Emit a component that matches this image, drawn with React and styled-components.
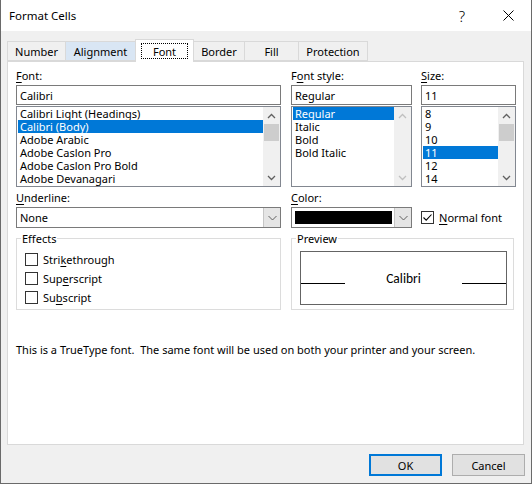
import React from "react";
import styled, { createGlobalStyle } from "styled-components";

const FONT = `"Noto Sans", "Segoe UI", "Liberation Sans", sans-serif`;

const GlobalStyle = createGlobalStyle`
  html, body { margin: 0; padding: 0; background: #ffffff; }
  *, *::before, *::after { box-sizing: border-box; }
  u { text-decoration-thickness: 1px; text-underline-offset: 2px; }
`;

const Window = styled.div`
  width: 532px;
  height: 484px;
  display: flex;
  flex-direction: column;
  background: #f0f0f0;
  border: 1px solid #6a6a6a;
  border-top: none;
  font-family: ${FONT};
  font-size: 11px;
  color: #000;
  overflow: hidden;
`;

const TitleBar = styled.div`
  height: 31px;
  flex-shrink: 0;
  display: flex;
  align-items: center;
  background: #ffffff;
`;

const Title = styled.div`
  flex: 1;
  padding-left: 8px;
  font-size: 11.5px;
`;

const CaptionButton = styled.div`
  width: 46px;
  height: 31px;
  display: flex;
  align-items: center;
  justify-content: center;
  font-size: 15px;
  font-weight: 300;
`;

const Body = styled.div`
  flex: 1;
  display: flex;
  flex-direction: column;
  padding: 8px 7px 0 6px;
`;

const TabStrip = styled.div`
  height: 22px;
  display: flex;
  align-items: flex-end;
`;

const Tab = styled.div`
  width: ${(p) => p.$w}px;
  height: ${(p) => (p.$active ? 23 : 20)}px;
  margin-left: ${(p) => (p.$first ? 0 : -1)}px;
  margin-bottom: ${(p) => (p.$active ? -1 : 0)}px;
  border: 1px solid #d9d9d9;
  border-bottom: ${(p) => (p.$active ? "none" : "1px solid #d9d9d9")};
  background: ${(p) => (p.$active ? "#ffffff" : p.$hover ? "#d9e6f4" : "#f0f0f0")};
  position: relative;
  z-index: ${(p) => (p.$active ? 2 : 1)};
  display: flex;
  justify-content: center;
  align-items: ${(p) => (p.$active ? "flex-start" : "center")};
  padding-top: ${(p) => (p.$active ? 0 : 1)}px;
`;

const FocusRing = styled.div`
  flex: 1;
  margin: 3px 5px 0;
  height: 16px;
  border: 1px dotted #000;
  display: flex;
  align-items: center;
  justify-content: center;
`;

const Panel = styled.div`
  height: 384px;
  background: #ffffff;
  border: 1px solid #d9d9d9;
  padding: 6px 0 0 8px;
  display: flex;
  flex-direction: column;
`;

const Grid = styled.div`
  display: grid;
  grid-template-columns: 265px 10px 121px 9px 95px;
  row-gap: 3px;
`;

const Cell = styled.div`
  grid-column: ${(p) => p.$col};
  display: flex;
  flex-direction: column;
`;

const Label = styled.div`
  height: 15px;
  line-height: 15px;
  margin-bottom: 2px;
  white-space: nowrap;
`;

const TextBox = styled.div`
  height: 20px;
  border: 1px solid #7a7a7a;
  background: #fff;
  padding-left: 3px;
  display: flex;
  align-items: center;
  margin-bottom: 1px;
`;

const ListBox = styled.div`
  height: 81px;
  border: 1px solid #828790;
  background: #fff;
  display: flex;
`;

const Items = styled.div`
  flex: 1;
  display: flex;
  flex-direction: column;
  overflow: hidden;
`;

const Item = styled.div`
  height: 13px;
  line-height: 13px;
  margin: 0 0 0 1px;
  padding-left: 2px;
  white-space: nowrap;
  background: ${(p) => (p.$sel ? "#0078d7" : "transparent")};
  color: ${(p) => (p.$sel ? "#ffffff" : "#000000")};
`;

const ScrollBar = styled.div`
  width: 17px;
  background: #f0f0f0;
  display: flex;
  flex-direction: column;
`;

const ScrollArrow = styled.div`
  height: 17px;
  display: flex;
  align-items: center;
  justify-content: center;
`;

const Track = styled.div`
  flex: 1;
  padding: 0 1px;
`;

const Thumb = styled.div`
  height: 17px;
  background: #cdcdcd;
`;

const Combo = styled.div`
  height: 21px;
  border: 1px solid #7a7a7a;
  background: #fff;
  display: flex;
  align-items: stretch;
`;

const ComboValue = styled.div`
  flex: 1;
  display: flex;
  align-items: center;
  padding-left: 3px;
`;

const Swatch = styled.div`
  flex: 1;
  margin: 3px 2px 3px 3px;
  background: #000;
`;

const ComboArrow = styled.div`
  width: 17px;
  background: #e5e5e5;
  border-left: 1px solid #c6c6c6;
  display: flex;
  align-items: center;
  justify-content: center;
`;

const CheckRow = styled.div`
  height: ${(p) => p.$h || 19}px;
  display: flex;
  align-items: center;
  gap: 5px;
  white-space: nowrap;
`;

const CheckBox = styled.div`
  width: 13px;
  height: 13px;
  border: 1px solid #333333;
  background: #fff;
  display: flex;
  align-items: center;
  justify-content: center;
  flex-shrink: 0;
`;

const Group = styled.fieldset`
  grid-column: ${(p) => p.$col};
  margin: 0 ${(p) => p.$mr || 0}px 0 0;
  padding: 0;
  min-width: 0;
  height: 79px;
  border: 1px solid #dcdcdc;
`;

const Legend = styled.legend`
  margin-left: 4px;
  padding: 0 1px;
  line-height: 15px;
  height: 15px;
`;

const GroupBody = styled.div`
  padding: ${(p) => p.$pad};
`;

const PreviewBox = styled.div`
  height: 54px;
  border: 1px solid #646464;
  display: flex;
  align-items: center;
`;

const BaseLine = styled.div`
  flex: 1;
  height: 1px;
  background: #000;
  margin-top: 11px;
`;

const PreviewText = styled.div`
  margin: 0 41px;
  font-family: "Carlito", "Noto Sans", sans-serif;
  font-size: 13.5px;
  line-height: 17px;
`;

const Note = styled.div`
  margin-top: 32px;
  line-height: 15px;
  white-space: pre;
`;

const ButtonRow = styled.div`
  display: flex;
  justify-content: flex-end;
  gap: 10px;
  padding-top: 9px;
  margin-right: -1px;
`;

const Button = styled.div`
  width: 73px;
  height: 22px;
  background: #e1e1e1;
  border: ${(p) => (p.$default ? "2px solid #0078d7" : "1px solid #adadad")};
  display: flex;
  align-items: center;
  justify-content: center;
`;

const Chevron = ({ up, color = "#606060" }) => (
  <svg width="9" height="6" viewBox="0 0 9 6">
    <polyline
      points={up ? "1,5 4.5,1.5 8,5" : "1,1 4.5,4.5 8,1"}
      fill="none"
      stroke={color}
      strokeWidth="1.3"
    />
  </svg>
);

const ThinChevron = () => (
  <svg width="9" height="6" viewBox="0 0 9 6">
    <polyline points="0.5,1 4.5,5 8.5,1" fill="none" stroke="#606060" strokeWidth="1" />
  </svg>
);

const Scroller = ({ enabled }) => {
  const c = enabled ? "#606060" : "#c0c0c0";
  return (
    <ScrollBar>
      <ScrollArrow>
        <Chevron up color={c} />
      </ScrollArrow>
      <Track>{enabled && <Thumb />}</Track>
      <ScrollArrow>
        <Chevron color={c} />
      </ScrollArrow>
    </ScrollBar>
  );
};

const List = ({ items, selected, enabled }) => (
  <ListBox>
    <Items>
      {items.map((it) => (
        <Item key={it} $sel={it === selected}>
          {it}
        </Item>
      ))}
    </Items>
    <Scroller enabled={enabled} />
  </ListBox>
);

const Check = ({ checked }) => (
  <CheckBox>
    {checked && (
      <svg width="11" height="11" viewBox="0 0 11 11">
        <polyline points="1.5,5.5 4.2,8.2 9.5,2.5" fill="none" stroke="#000" strokeWidth="1.1" />
      </svg>
    )}
  </CheckBox>
);

const tabs = [
  { name: "Number", w: 59 },
  { name: "Alignment", w: 71, hover: true },
  { name: "Font", w: 59, active: true },
  { name: "Border", w: 52 },
  { name: "Fill", w: 55 },
  { name: "Protection", w: 70 },
];

export default function App() {
  return (
    <>
      <GlobalStyle />
      <Window>
        <TitleBar>
          <Title>Format Cells</Title>
          <CaptionButton>?</CaptionButton>
          <CaptionButton>
            <svg width="11" height="11" viewBox="0 0 11 11">
              <path d="M0.5 0.5 L10.5 10.5 M10.5 0.5 L0.5 10.5" stroke="#000" strokeWidth="1" />
            </svg>
          </CaptionButton>
        </TitleBar>
        <Body>
          <TabStrip>
            {tabs.map((t, i) => (
              <Tab key={t.name} $w={t.w} $first={i === 0} $active={t.active} $hover={t.hover}>
                {t.active ? <FocusRing>{t.name}</FocusRing> : t.name}
              </Tab>
            ))}
          </TabStrip>
          <Panel>
            <Grid>
              <Cell $col="1">
                <Label>
                  <u>F</u>ont:
                </Label>
                <TextBox>Calibri</TextBox>
                <List
                  enabled
                  selected="Calibri (Body)"
                  items={[
                    "Calibri Light (Headings)",
                    "Calibri (Body)",
                    "Adobe Arabic",
                    "Adobe Caslon Pro",
                    "Adobe Caslon Pro Bold",
                    "Adobe Devanagari",
                  ]}
                />
              </Cell>
              <Cell $col="3">
                <Label>
                  F<u>o</u>nt style:
                </Label>
                <TextBox>Regular</TextBox>
                <List selected="Regular" items={["Regular", "Italic", "Bold", "Bold Italic"]} />
              </Cell>
              <Cell $col="5">
                <Label>
                  <u>S</u>ize:
                </Label>
                <TextBox>11</TextBox>
                <List enabled selected="11" items={["8", "9", "10", "11", "12", "14"]} />
              </Cell>

              <Cell $col="1">
                <Label>
                  <u>U</u>nderline:
                </Label>
                <Combo>
                  <ComboValue>None</ComboValue>
                  <ComboArrow>
                    <ThinChevron />
                  </ComboArrow>
                </Combo>
              </Cell>
              <Cell $col="3">
                <Label>
                  <u>C</u>olor:
                </Label>
                <Combo>
                  <Swatch />
                  <ComboArrow>
                    <ThinChevron />
                  </ComboArrow>
                </Combo>
              </Cell>
              <Cell $col="5">
                <Label />
                <CheckRow $h={21}>
                  <Check checked />
                  <span>
                    <u>N</u>ormal font
                  </span>
                </CheckRow>
              </Cell>

              <Group $col="1">
                <Legend>Effects</Legend>
                <GroupBody $pad="4px 0 0 8px">
                  <CheckRow>
                    <Check />
                    <span>
                      Stri<u>k</u>ethrough
                    </span>
                  </CheckRow>
                  <CheckRow>
                    <Check />
                    <span>
                      Sup<u>e</u>rscript
                    </span>
                  </CheckRow>
                  <CheckRow>
                    <Check />
                    <span>
                      Su<u>b</u>script
                    </span>
                  </CheckRow>
                </GroupBody>
              </Group>
              <Group $col="3 / 6" $mr={2}>
                <Legend>Preview</Legend>
                <GroupBody $pad="5px 6px 0 8px">
                  <PreviewBox>
                    <BaseLine />
                    <PreviewText>Calibri</PreviewText>
                    <BaseLine />
                  </PreviewBox>
                </GroupBody>
              </Group>
            </Grid>
            <Note>This is a TrueType font.  The same font will be used on both your printer and your screen.</Note>
          </Panel>
          <ButtonRow>
            <Button $default>OK</Button>
            <Button>Cancel</Button>
          </ButtonRow>
        </Body>
      </Window>
    </>
  );
}
